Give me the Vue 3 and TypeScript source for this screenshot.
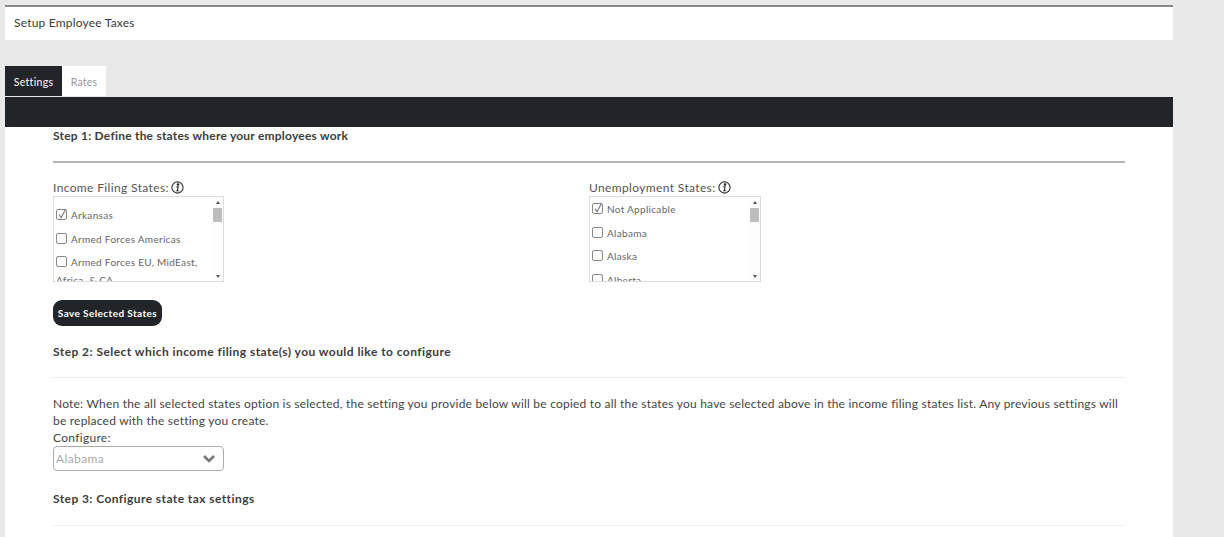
<script setup lang="ts">
const income = [
  { label: 'Arkansas', on: true },
  { label: 'Armed Forces Americas', on: false },
  { label: 'Armed Forces EU, MidEast, Africa, & CA', on: false },
]
const unemployment = [
  { label: 'Not Applicable', on: true },
  { label: 'Alabama', on: false },
  { label: 'Alaska', on: false },
  { label: 'Alberta', on: false },
]
const lists = [
  { title: 'Income Filing States:', items: income, cls: 'income' },
  { title: 'Unemployment States:', items: unemployment, cls: 'unemp' },
]
</script>

<template>
  <div class="page">
    <header class="title">Setup Employee Taxes</header>
    <nav class="tabs">
      <div class="tab active">Settings</div>
      <div class="tab">Rates</div>
    </nav>
    <div class="bar"></div>
    <main class="content">
      <h2 class="step first">Step 1: Define the states where your employees work</h2>
      <hr class="rule dark" />
      <div class="cols">
        <section v-for="l in lists" :key="l.title" class="col">
          <div class="label">
            {{ l.title }}
            <svg class="info" width="13" height="13" viewBox="0 0 13 13">
              <circle cx="6.5" cy="6.5" r="5.6" fill="#fff" stroke="#333" stroke-width="1.1" />
              <circle cx="7" cy="3.4" r="1.25" fill="#222" />
              <path d="M4.8 5.6 L7.8 5.2 L6.9 9.4 L8.2 9.4 L8.2 10.2 L5 10.2 L5 9.4 L5.8 9.4 L6.4 6.3 L4.8 6.3 Z" fill="#222" />
            </svg>
          </div>
          <div class="listbox" :class="l.cls">
            <div class="items">
              <div v-for="i in l.items" :key="i.label" class="item">
                <span class="box">
                  <svg v-if="i.on" width="12" height="12" viewBox="0 0 12 12">
                    <path d="M3 6.5 L5 9.8 L9.6 1.2" fill="none" stroke="#777" stroke-width="1.1" />
                  </svg>
                </span>{{ i.label }}
              </div>
            </div>
            <div class="scroll">
              <span class="arrow up"></span>
              <span class="thumb"></span>
              <span class="spacer"></span>
              <span class="arrow down"></span>
            </div>
          </div>
        </section>
      </div>
      <button class="save">Save Selected States</button>
      <h2 class="step two">Step 2: Select which income filing state(s) you would like to configure</h2>
      <hr class="rule" />
      <p class="note">Note: When the all selected states option is selected, the setting you provide below will be copied to all the states you have selected above in the income filing states list. Any previous settings will be replaced with the setting you create.</p>
      <div class="cfg">Configure:</div>
      <div class="select">
        <span>Alabama</span>
        <svg width="14" height="9" viewBox="0 0 14 9">
          <path d="M2 2 L7 7 L12 2" fill="none" stroke="#777" stroke-width="2.6" />
        </svg>
      </div>
      <h2 class="step three">Step 3: Configure state tax settings</h2>
      <hr class="rule last" />
    </main>
  </div>
</template>

<style>
html, body { margin: 0; background: #e9e9e9; overflow: hidden; }
</style>

<style scoped>
.page {
  width: 1168px;
  margin-left: 5px;
  padding-top: 5px;
  height: 532px;
  overflow: hidden;
  font-family: "Lato", "Open Sans", sans-serif;
  color: #444;
  font-size: 12px;
}
.title {
  box-sizing: border-box;
  height: 35px;
  line-height: 31px;
  background: #fff;
  border-top: 2px solid #888;
  padding-left: 9px;
  font-size: 12px;
  letter-spacing: 0.2px;
  color: #3a3a3a;
}
.tabs { display: flex; margin-top: 26px; height: 30px; }
.tab {
  width: 44px;
  background: #fff;
  color: #999;
  font-size: 10.5px;
  letter-spacing: 0.2px;
  line-height: 32px;
  text-align: center;
  height: 30px;
}
.tab.active { width: 57px; background: #212529; color: #fff; letter-spacing: 0.3px; }
.bar { height: 30px; margin-top: 1px; background: #212529; }
.content { background: #fff; padding: 0 48px; height: 410px; }
.step { margin: 0; font-size: 12px; font-weight: 700; color: #3c3c3c; letter-spacing: 0.42px; line-height: 16px; }
.first { padding-top: 1px; letter-spacing: 0.22px; }
.two { margin-top: 18px; letter-spacing: 0.45px; }
.three { margin-top: 20px; }
.rule { border: 0; height: 1px; background: #eee; margin: 17px 0 0; }
.rule.last { margin-top: 18px; }
.rule.dark { height: 2px; background: #b4b4b4; margin-top: 17px; }
.cols { display: flex; margin-top: 16px; }
.col { width: 536px; }
.label { display: flex; align-items: center; gap: 2px; height: 16px; font-size: 12px; letter-spacing: 0.36px; color: #555; }
.info { flex: none; }
.listbox {
  display: flex;
  box-sizing: border-box;
  height: 86px;
  width: 171px;
  margin-top: 1px;
  border: 1px solid #dcdcdc;
  overflow: hidden;
  background: #fff;
}
.unemp.listbox { width: 172px; }
.items { flex: 1; padding: 0 2px; font-size: 10px; letter-spacing: 0.3px; color: #666; line-height: 18px; }
.income .items { padding-top: 9px; }
.unemp .items { padding-top: 3px; }
.item { min-height: 18px; margin-bottom: 5.5px; }
.box {
  display: inline-block;
  width: 9px;
  height: 9px;
  margin-right: 4px;
  border: 1px solid #888;
  border-radius: 2px;
  vertical-align: -1px;
  position: relative;
  background: #fff;
}
.box svg { position: absolute; left: -1px; top: -2px; }
.scroll { width: 11px; flex: none; display: flex; flex-direction: column; align-items: center; background: #fdfdfd; }
.arrow { width: 0; height: 0; border-left: 2.5px solid transparent; border-right: 2.5px solid transparent; flex: none; }
.arrow.up { border-bottom: 3px solid #555; margin-top: 4px; }
.arrow.down { border-top: 3px solid #555; margin-bottom: 3px; }
.thumb { width: 9px; height: 14px; background: #bdbdbd; margin-top: 4px; flex: none; }
.spacer { flex: 1; }
.save {
  display: block;
  margin-top: 18px;
  width: 109px;
  height: 26px;
  padding: 0;
  border: 0;
  border-radius: 9px;
  background: #212529;
  color: #fff;
  font: 700 10px "Lato", sans-serif;
  letter-spacing: 0.4px;
}
.note { margin: 17px 0 0; font-size: 12px; line-height: 17px; letter-spacing: 0.21px; color: #444; }
.cfg { line-height: 17px; letter-spacing: 0.3px; color: #444; font-size: 12px; }
.select {
  display: flex;
  align-items: center;
  justify-content: space-between;
  box-sizing: border-box;
  width: 171px;
  height: 25px;
  padding: 0 7px 0 2px;
  border: 1px solid #aaa;
  border-radius: 4px;
  color: #aaa;
  letter-spacing: 0.4px;
  font-size: 12px;
}
</style>
